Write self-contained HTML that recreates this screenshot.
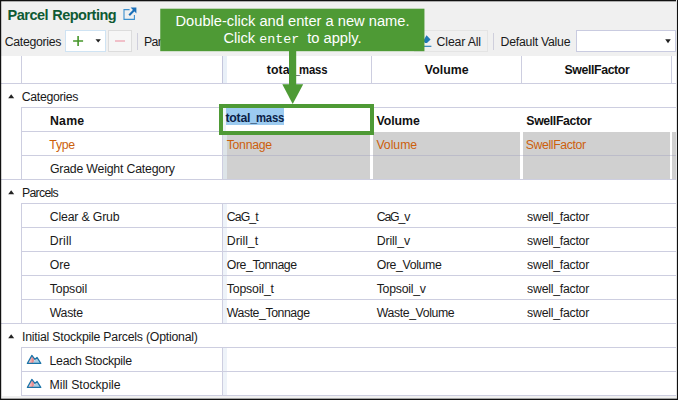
<!DOCTYPE html>
<html><head><meta charset="utf-8">
<style>
html,body{margin:0;padding:0;}
body{width:678px;height:400px;overflow:hidden;background:#fff;position:relative;font-family:"Liberation Sans",sans-serif;font-size:12.3px;color:#1a1a1a;}
.abs{position:absolute;}
.t{position:absolute;white-space:nowrap;line-height:14px;height:14px;}
.hl{position:absolute;height:1px;background:#cdcee0;}
.vl{position:absolute;width:1px;background:#cdcee0;}
.b{font-weight:bold;color:#111;}
.o{color:#cc5f0c;}
</style></head><body>
<!-- top panel bg -->
<div class="abs" style="left:0;top:0;width:678px;height:56px;background:#f0f0f0;"></div>
<div class="abs b" style="left:7.5px;top:7px;font-size:14.5px;line-height:16px;height:16px;white-space:nowrap;letter-spacing:-0.5px;word-spacing:0.6px;color:#0e5a34;">Parcel Reporting</div>
<svg class="abs" style="left:123.3px;top:7.3px" width="14" height="13.5" viewBox="0 0 14 13.5"><path d="M6.6 2.6H1V12.4H11.4V8" fill="none" stroke="#3b8fce" stroke-width="1.1"/><path d="M6.2 8.2L12 2.2" fill="none" stroke="#1a6fb8" stroke-width="2"/><path d="M7.6 0.6H13.4V6.4Z" fill="#1a6fb8"/></svg>
<!-- toolbar -->
<div class="abs" style="left:65px;top:30px;width:39px;height:20px;background:#fff;border:1px solid #cfe3f3;"></div>
<svg class="abs" style="left:73px;top:36px" width="11" height="11"><path d="M5.1 0.1V10M0.1 5.05H10.1" stroke="#46962a" stroke-width="1.6"/></svg>
<svg class="abs" style="left:95px;top:38.5px" width="7" height="5"><path d="M0.5 0.3H5.9L3.2 3.6Z" fill="#222"/></svg>
<div class="abs" style="left:108px;top:30px;width:22px;height:20px;background:#f6f6f6;border:1px solid #dcdcdc;"></div>
<div class="abs" style="left:114.5px;top:40px;width:10px;height:2px;background:#f1c0c9;"></div>
<div class="vl" style="left:137px;top:33px;height:17px;background:#cfcfdc;"></div>
<!-- clear all -->
<div class="abs" style="left:414px;top:30px;width:72px;height:20px;border:1px solid #e4e4e4;"></div>
<svg class="abs" style="left:421px;top:34px" width="12" height="14"><path d="M5.5 1.2L9.6 5.5L6 9H4L2.2 7Z" fill="#1f78b4"/><path d="M2.6 12.3H10.4" stroke="#1f78b4" stroke-width="1.1"/></svg>
<div class="vl" style="left:493px;top:33px;height:17px;background:#cfcfdc;"></div>
<div class="abs" style="left:576px;top:30px;width:98px;height:20px;background:#fff;border:1px solid #c9cbe0;"></div>
<svg class="abs" style="left:665px;top:38.6px" width="7" height="5"><path d="M0.2 0.3H5.8L3 4.2Z" fill="#222"/></svg>

<!-- grid area -->
<div class="abs" style="left:1px;top:56px;width:676px;height:340px;background:#fff;"></div>
<!-- light strips right of col1 line -->
<div class="abs" style="left:223px;top:56px;width:4px;height:27px;background:#e9f0f8;"></div>
<div class="abs" style="left:223px;top:108px;width:4px;height:71px;background:#e9f0f8;"></div>
<div class="abs" style="left:223px;top:204px;width:4px;height:119px;background:#eef3f9;"></div>
<div class="abs" style="left:223px;top:348px;width:4px;height:47px;background:#eef3f9;"></div>
<!-- grey cells -->
<div class="abs" style="left:223px;top:132px;width:4px;height:47px;background:#dde4e8;"></div>
<div class="abs" style="left:227px;top:132px;width:143px;height:47px;background:#d0d0d0;"></div>
<div class="abs" style="left:373px;top:132px;width:147px;height:47px;background:#d0d0d0;"></div>
<div class="abs" style="left:523px;top:132px;width:147px;height:47px;background:#d0d0d0;"></div>
<div class="abs" style="left:672px;top:132px;width:5px;height:47px;background:#d0d0d0;"></div>
<div class="abs" style="left:223px;top:155px;width:454px;height:1px;background:#8f8fb8;opacity:.3;"></div>

<!-- header verticals -->
<div class="vl" style="left:21px;top:56px;height:27px;"></div>
<div class="vl" style="left:222px;top:56px;height:27px;background:#c4c6dc;"></div>
<div class="vl" style="left:371px;top:56px;height:27px;"></div>
<div class="vl" style="left:521px;top:56px;height:27px;"></div>
<div class="vl" style="left:671px;top:56px;height:27px;"></div>
<div class="hl" style="left:1px;top:83px;width:676px;"></div>

<!-- group row triangles -->
<svg class="abs" style="left:8px;top:94px" width="7" height="5"><path d="M0.2 4.2H6.2L3.2 0.3Z" fill="#222"/></svg>
<svg class="abs" style="left:8px;top:190px" width="7" height="5"><path d="M0.2 4.2H6.2L3.2 0.3Z" fill="#222"/></svg>
<svg class="abs" style="left:8px;top:334px" width="7" height="5"><path d="M0.2 4.2H6.2L3.2 0.3Z" fill="#222"/></svg>

<!-- horizontal lines -->
<div class="hl" style="left:21px;top:107px;width:656px;"></div>
<div class="hl" style="left:21px;top:131px;width:202px;"></div>
<div class="hl" style="left:21px;top:155px;width:202px;"></div>
<div class="hl" style="left:1px;top:179px;width:676px;"></div>
<div class="hl" style="left:21px;top:203px;width:656px;"></div>
<div class="hl" style="left:21px;top:227px;width:656px;"></div>
<div class="hl" style="left:21px;top:251px;width:656px;"></div>
<div class="hl" style="left:21px;top:275px;width:656px;"></div>
<div class="hl" style="left:21px;top:299px;width:656px;"></div>
<div class="hl" style="left:1px;top:323px;width:676px;"></div>
<div class="hl" style="left:21px;top:347px;width:656px;"></div>
<div class="hl" style="left:21px;top:371px;width:656px;"></div>
<div class="hl" style="left:21px;top:395px;width:656px;"></div>
<div class="abs" style="left:2px;top:396px;width:674px;height:3px;background:#f0f0f0;"></div>
<!-- vertical lines in body -->
<div class="vl" style="left:21px;top:107px;height:72px;"></div>
<div class="vl" style="left:21px;top:203px;height:120px;"></div>
<div class="vl" style="left:21px;top:347px;height:48px;"></div>
<div class="vl" style="left:222px;top:107px;height:72px;"></div>
<div class="vl" style="left:222px;top:203px;height:120px;"></div>
<div class="vl" style="left:222px;top:347px;height:48px;"></div>

<!-- Stockpile icons -->
<svg class="abs" style="left:26px;top:354px" width="16" height="11" viewBox="0 0 16 11"><defs><linearGradient id="g354" x1="0" x2="1" y1="0" y2="0"><stop offset="0" stop-color="#fdeeee"/><stop offset=".55" stop-color="#f0a6a8"/><stop offset=".8" stop-color="#e27f83"/><stop offset="1" stop-color="#f7d6d6"/></linearGradient></defs><path d="M1.6 9.3L6 1.5L8.6 5.4L7.4 9.3Z" fill="url(#g354)"/><path d="M7.2 9.3L8.8 5.6L11 3.6L14.6 9.3Z" fill="#a9cde2"/><path d="M1.4 9.4L5.9 1.4L8.9 5.4L11 3.4L14.8 9.4Z" fill="none" stroke="#1a73a8" stroke-width="1.2" stroke-linejoin="round"/></svg>
<svg class="abs" style="left:26px;top:378px" width="16" height="11" viewBox="0 0 16 11"><defs><linearGradient id="g378" x1="0" x2="1" y1="0" y2="0"><stop offset="0" stop-color="#fdeeee"/><stop offset=".55" stop-color="#f0a6a8"/><stop offset=".8" stop-color="#e27f83"/><stop offset="1" stop-color="#f7d6d6"/></linearGradient></defs><path d="M1.6 9.3L6 1.5L8.6 5.4L7.4 9.3Z" fill="url(#g378)"/><path d="M7.2 9.3L8.8 5.6L11 3.6L14.6 9.3Z" fill="#a9cde2"/><path d="M1.4 9.4L5.9 1.4L8.9 5.4L11 3.4L14.8 9.4Z" fill="none" stroke="#1a73a8" stroke-width="1.2" stroke-linejoin="round"/></svg>

<!-- edit box -->
<div class="abs" style="left:219px;top:104px;width:147px;height:23px;border:4px solid #4e9a35;background:#fff;"></div>
<div class="abs" style="left:223px;top:108px;width:3px;height:23px;background:#eef3f9;"></div>
<div class="abs" style="left:226px;top:108px;width:58px;height:17px;background:#9ccbf0;"></div>

<div class="t " style="left:4.80px;top:35px;letter-spacing:-0.324px;">Categories</div>
<div class="t " style="left:144.10px;top:35px;letter-spacing:-0.718px;">Parcels</div>
<div class="t " style="left:436.60px;top:35px;letter-spacing:-0.162px;">Clear All</div>
<div class="t " style="left:500.60px;top:35px;letter-spacing:-0.251px;">Default Value</div>
<div class="t b" style="left:266.80px;top:63px;letter-spacing:0.079px;">total_<span style="display:inline-block;margin-left:-1.08px;letter-spacing:-0.127px;transform:scaleX(.92);transform-origin:0 0;">mass</span></div>
<div class="t b" style="left:424.80px;top:63px;letter-spacing:0.056px;">Volume</div>
<div class="t b" style="left:564.40px;top:63px;letter-spacing:-0.363px;">SwellFactor</div>
<div class="t " style="left:21.70px;top:90px;letter-spacing:-0.297px;">Categories</div>
<div class="t " style="left:22.00px;top:186px;letter-spacing:-0.718px;">Parcels</div>
<div class="t " style="left:22.00px;top:330px;letter-spacing:-0.227px;">Initial Stockpile Parcels (Optional)</div>
<div class="t b" style="left:49.90px;top:114px;letter-spacing:0.265px;">Name</div>
<div class="t b" style="left:376.40px;top:114px;letter-spacing:-0.022px;">Volume</div>
<div class="t b" style="left:526.30px;top:114px;letter-spacing:-0.363px;">SwellFactor</div>
<div class="t o" style="left:49.30px;top:138px;letter-spacing:-0.254px;">Type</div>
<div class="t o" style="left:226.70px;top:138px;letter-spacing:-0.281px;">Tonnage</div>
<div class="t o" style="left:376.40px;top:138px;letter-spacing:-0.046px;">Volume</div>
<div class="t o" style="left:525.80px;top:138px;letter-spacing:-0.394px;">SwellFactor</div>
<div class="t " style="left:49.90px;top:162px;letter-spacing:-0.193px;">Grade Weight Category</div>
<div class="t " style="left:49.70px;top:210px;letter-spacing:-0.169px;">Clear &amp; Grub</div>
<div class="t " style="left:226.80px;top:210px;letter-spacing:-0.913px;">CaG_t</div>
<div class="t " style="left:376.70px;top:210px;letter-spacing:-1.143px;">CaG_v</div>
<div class="t " style="left:527.10px;top:210px;letter-spacing:-0.248px;">swell_factor</div>
<div class="t " style="left:49.70px;top:234px;letter-spacing:0.180px;">Drill</div>
<div class="t " style="left:226.80px;top:234px;letter-spacing:-0.022px;">Drill_t</div>
<div class="t " style="left:376.70px;top:234px;letter-spacing:-0.128px;">Drill_v</div>
<div class="t " style="left:527.10px;top:234px;letter-spacing:-0.248px;">swell_factor</div>
<div class="t " style="left:49.70px;top:258px;letter-spacing:-0.053px;">Ore</div>
<div class="t " style="left:226.80px;top:258px;letter-spacing:-0.423px;">Ore_Tonnage</div>
<div class="t " style="left:376.70px;top:258px;letter-spacing:-0.363px;">Ore_Volume</div>
<div class="t " style="left:527.10px;top:258px;letter-spacing:-0.248px;">swell_factor</div>
<div class="t " style="left:49.70px;top:282px;letter-spacing:-0.131px;">Topsoil</div>
<div class="t " style="left:226.80px;top:282px;letter-spacing:-0.168px;">Topsoil_t</div>
<div class="t " style="left:376.70px;top:282px;letter-spacing:-0.259px;">Topsoil_v</div>
<div class="t " style="left:527.10px;top:282px;letter-spacing:-0.248px;">swell_factor</div>
<div class="t " style="left:49.70px;top:306px;letter-spacing:-0.274px;">Waste</div>
<div class="t " style="left:226.80px;top:306px;letter-spacing:-0.435px;">Waste_Tonnage</div>
<div class="t " style="left:376.70px;top:306px;letter-spacing:-0.387px;">Waste_Volume</div>
<div class="t " style="left:527.10px;top:306px;letter-spacing:-0.248px;">swell_factor</div>
<div class="t " style="left:49.60px;top:354px;letter-spacing:-0.316px;">Leach Stockpile</div>
<div class="t " style="left:49.60px;top:378px;letter-spacing:-0.059px;">Mill Stockpile</div>
<div class="t b" style="left:225.40px;top:111px;letter-spacing:-0.202px;color:#0b1f48;">total_<span style="display:inline-block;margin-left:-0.59px;letter-spacing:-0.202px;transform:scaleX(.92);transform-origin:0 0;">mass</span></div>

<!-- callout -->
<svg class="abs" style="left:0;top:0" width="678" height="120"><rect x="160.25" y="8.7" width="264.2" height="42.5" fill="#4e9a35"/><rect x="289" y="50" width="7.2" height="36" fill="#4e9a35"/><path d="M282.3 84.2H303.2L292.7 103.9Z" fill="#4e9a35"/></svg>
<div class="abs" style="left:160px;top:13px;width:265px;text-align:center;color:#fff;font-size:14.68px;line-height:17px;white-space:nowrap;">Double-click and enter a new name.<br>Click <span style="font-family:'Liberation Mono',monospace;font-size:13.3px;">enter </span> to apply.</div>

<!-- outer border -->
<div class="abs" style="left:0;top:0;width:678px;height:1px;background:#111;"></div>
<div class="abs" style="left:0;top:1px;width:678px;height:1px;background:#111;opacity:.3;"></div>
<div class="abs" style="left:0;top:0;width:1px;height:400px;background:#111;"></div>
<div class="abs" style="left:677px;top:0;width:1px;height:400px;background:#111;"></div>
<div class="abs" style="left:0;top:399px;width:678px;height:1px;background:#111;"></div>
<div class="abs" style="left:0;top:398px;width:678px;height:1px;background:#111;opacity:.35;"></div>
<div class="abs" style="left:1px;top:0;width:1px;height:400px;background:#111;opacity:.2;"></div>
<div class="abs" style="left:676px;top:0;width:1px;height:398px;background:#fff;"></div>
<div class="abs" style="left:676px;top:0;width:1px;height:400px;background:#111;opacity:.12;"></div>
</body></html>
